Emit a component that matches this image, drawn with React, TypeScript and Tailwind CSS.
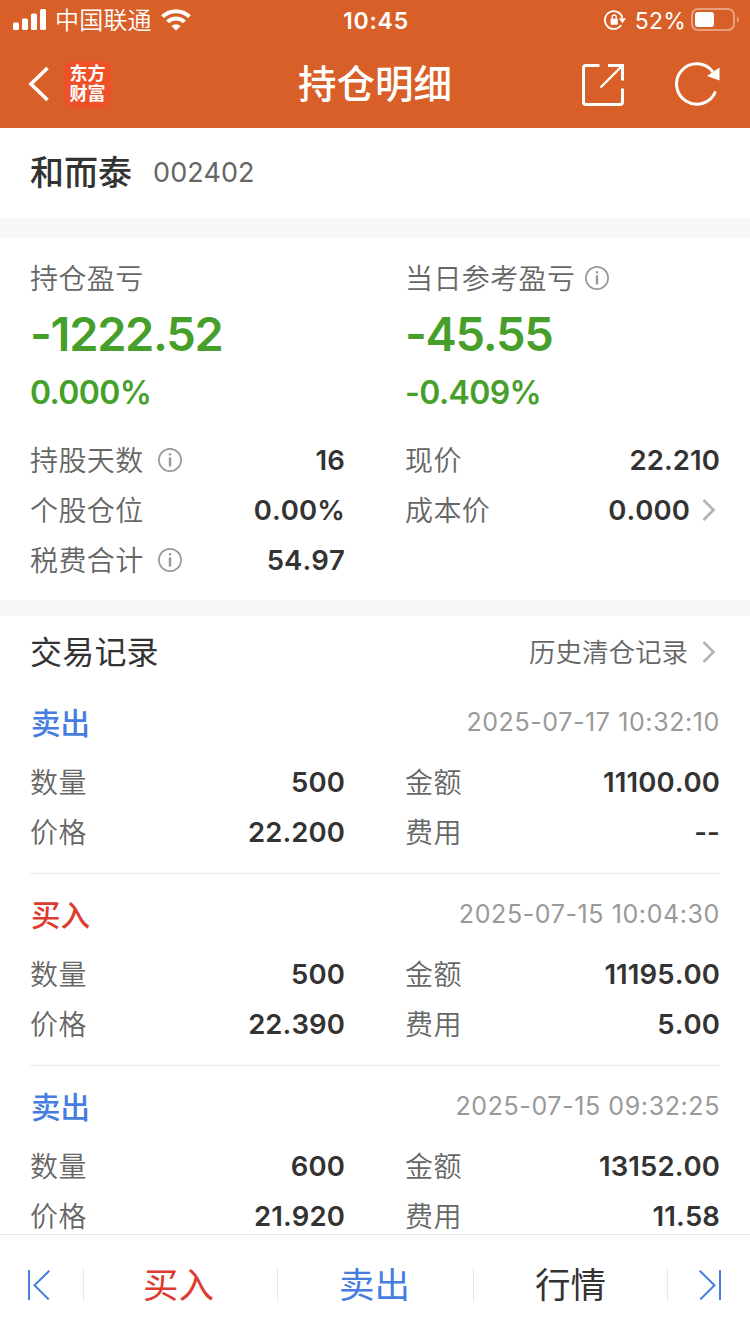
import React from 'react';

interface TradeRecord {
  side: 'buy' | 'sell';
  time: string;
  quantity: string;
  amount: string;
  price: string;
  fee: string;
}

const records: TradeRecord[] = [
  { side: 'sell', time: '2025-07-17 10:32:10', quantity: '500', amount: '11100.00', price: '22.200', fee: '--' },
  { side: 'buy', time: '2025-07-15 10:04:30', quantity: '500', amount: '11195.00', price: '22.390', fee: '5.00' },
  { side: 'sell', time: '2025-07-15 09:32:25', quantity: '600', amount: '13152.00', price: '21.920', fee: '11.58' },
];

const InfoIcon: React.FC = () => (
  <svg className="w-6 h-6 shrink-0" viewBox="0 0 24 24" fill="none" stroke="#999">
    <circle cx="12" cy="12" r="11.1" strokeWidth="1.7" />
    <path d="M12 9.3V18.6" strokeWidth="2.4" />
    <path d="M12 5.2V7.4" strokeWidth="2.4" />
  </svg>
);

const ChevronIcon: React.FC = () => (
  <svg className="w-3.5 h-6 shrink-0" viewBox="0 0 14 24" fill="none" stroke="#b3b3b3" strokeWidth="2.6">
    <path d="M1.5 2L11.5 12L1.5 22" />
  </svg>
);

const StatusBar: React.FC = () => (
  <div className="grid grid-cols-3 items-center h-10 pl-[13px] pr-[11px]">
    <div className="flex items-center">
      <svg className="w-[33px] h-[22px]" viewBox="0 0 33 22" fill="#fff">
        <rect x="0" y="13.5" width="6" height="7.5" rx="1.5" />
        <rect x="9" y="9.5" width="6" height="11.5" rx="1.5" />
        <rect x="18" y="4.5" width="6" height="16.5" rx="1.5" />
        <rect x="27" y="0" width="6" height="21" rx="1.5" />
      </svg>
      <span className="ml-[9px] pt-0.5 text-2xl font-[350] tracking-[0.2px]">中国联通</span>
      <svg className="ml-[9px] w-[30px] h-[22px]" viewBox="0 0 30 22" fill="none" stroke="#fff" strokeWidth="4">
        <path d="M1.6 7.7A19 19 0 0 1 28.4 7.7" />
        <path d="M6.6 12.9A12 12 0 0 1 23.4 12.9" />
        <path d="M10.4 17A6.8 6.8 0 0 1 19.6 17L15 21.5Z" fill="#fff" stroke="none" />
      </svg>
    </div>
    <div className="pt-0.5 text-center text-[23px] font-semibold tracking-[0.8px]">10:45</div>
    <div className="flex items-center justify-end">
      <svg className="w-[22px] h-[22px]" viewBox="0 0 22 22" fill="none" stroke="#fff">
        <path d="M17.2 16A8.9 8.9 0 1 1 18.4 8.8" strokeWidth="1.8" />
        <path d="M14.8 9.2H22L18.4 14.2Z" fill="#fff" stroke="none" />
        <rect x="6.6" y="9.8" width="7.2" height="6" rx="0.8" fill="#fff" stroke="none" />
        <path d="M8.2 10V8A2 2 0 0 1 12.2 8V10" strokeWidth="1.4" />
      </svg>
      <span className="ml-[9px] pt-0.5 text-[23px] tracking-[0.2px]">52%</span>
      <svg className="ml-[5px] -mr-px w-[49px] h-6" viewBox="0 0 49 24" fill="none">
        <rect x="1" y="1" width="42" height="21" rx="6" stroke="#fff" strokeOpacity="0.4" strokeWidth="2" />
        <rect x="4" y="4" width="19" height="15" rx="3" fill="#fff" />
        <path d="M46 8.5Q48 9.5 48 11.5Q48 13.5 46 14.5Z" fill="#fff" fillOpacity="0.45" />
      </svg>
    </div>
  </div>
);

const NavBar: React.FC = () => (
  <div className="grid grid-cols-3 items-center h-[88px] pl-7 pr-[30px]">
    <div className="flex items-center">
      <svg className="w-[21px] h-9" viewBox="0 0 21 36" fill="none" stroke="#fff" strokeWidth="3.6">
        <path d="M19.5 2L3 18L19.5 34" />
      </svg>
      <div className="ml-[15px] w-[47px] h-[47px] rounded-lg bg-[#ec5127] flex flex-col items-center justify-center text-[18px] leading-[20px] font-bold">
        <span>东方</span>
        <span>财富</span>
      </div>
    </div>
    <h1 className="pl-0.5 text-center text-[38.5px] leading-none font-medium whitespace-nowrap">持仓明细</h1>
    <div className="flex items-center justify-end gap-[51px]">
      <svg className="w-[42px] h-[42px] mt-0.5" viewBox="0 0 42 42" fill="none" stroke="#fff" strokeWidth="3">
        <path d="M17.5 1.5H4Q1.5 1.5 1.5 4V38Q1.5 40.5 4 40.5H38Q40.5 40.5 40.5 38V24.5" />
        <path d="M26 1.5H40.5V16.5" />
        <path d="M40 2L18.5 23.5" strokeWidth="2.4" />
      </svg>
      <svg className="w-[45px] h-[44px]" viewBox="0 0 45 44" fill="none" stroke="#fff" strokeWidth="3">
        <path d="M40.5 29.5A20.2 20.2 0 1 1 38 10" />
        <path d="M44.5 5.5V18.5L32 14Z" fill="#fff" stroke="none" />
      </svg>
    </div>
  </div>
);

interface FieldProps {
  label: string;
  value: string;
  info?: boolean;
  arrow?: boolean;
}

const Field: React.FC<FieldProps> = ({ label, value, info, arrow }) => (
  <div className="flex items-center justify-between h-[50px]">
    <div className="flex items-center gap-3.5">
      <span className="pt-0.5 text-[28px] font-[350] tracking-[0.4px] text-[#666]">{label}</span>
      {info && <InfoIcon />}
    </div>
    <div className="flex items-center gap-3">
      <span className="pt-0.5 text-[27.5px] font-semibold tracking-[0.1px] [font-kerning:none] text-[#333]">{value}</span>
      {arrow && (
        <span className="pr-1">
          <ChevronIcon />
        </span>
      )}
    </div>
  </div>
);

const RecordItem: React.FC<{ record: TradeRecord }> = ({ record }) => (
  <div className="pt-[15px] pb-4 border-b border-[#ebebeb]">
    <div className="flex items-center justify-between h-[50px] mb-2.5">
      <span className={`pt-0.5 pl-px text-[29.5px] font-medium ${record.side === 'buy' ? 'text-[#dd3a30]' : 'text-[#457de0]'}`}>
        {record.side === 'buy' ? '买入' : '卖出'}
      </span>
      <span className="pt-0.5 text-[25px] tracking-[0.6px] text-[#999]">{record.time}</span>
    </div>
    <div className="grid grid-cols-2 gap-x-[60px]">
      <Field label="数量" value={record.quantity} />
      <Field label="金额" value={record.amount} />
      <Field label="价格" value={record.price} />
      <Field label="费用" value={record.fee} />
    </div>
  </div>
);

const App: React.FC = () => {
  return (
    <div className="flex flex-col w-[750px] h-[1334px] overflow-hidden bg-white font-['Inter','Noto_Sans_CJK_SC',sans-serif]">
      <header className="shrink-0 bg-[#d86028] text-white">
        <StatusBar />
        <NavBar />
      </header>

      <main className="flex-1 min-h-0 overflow-hidden">
        {/* Stock */}
        <div className="flex items-center h-[90px] px-[30px] gap-[21px]">
          <span className="text-[34px] leading-none font-medium text-[#333]">和而泰</span>
          <span className="text-[27px] tracking-[0.1px] text-[#666]">002402</span>
        </div>
        <div className="h-5 bg-[#f7f8fa]" />

        {/* Position summary */}
        <section className="h-[362px] px-[30px] pt-[15px]">
          <div className="grid grid-cols-2 gap-x-[60px]">
            <div>
              <div className="flex items-center h-[50px] pt-0.5 text-[28px] font-[350] tracking-[0.4px] text-[#666]">持仓盈亏</div>
              <div className="flex items-center h-[62px] text-[47px] font-semibold tracking-[-1.3px] text-[#469f2b]">-1222.52</div>
              <div className="flex items-center h-[54px] pt-0.5 text-[32px] font-semibold tracking-[-0.6px] text-[#469f2b]">0.000%</div>
            </div>
            <div>
              <div className="flex items-center gap-2.5 h-[50px] text-[28px] font-[350] tracking-[0.4px] text-[#666]">
                <span className="pt-0.5">当日参考盈亏</span>
                <InfoIcon />
              </div>
              <div className="flex items-center h-[62px] text-[47px] font-semibold tracking-[-1.3px] text-[#469f2b]">-45.55</div>
              <div className="flex items-center h-[54px] pt-0.5 text-[32px] font-semibold tracking-[-0.6px] text-[#469f2b]">-0.409%</div>
            </div>
          </div>
          <div className="grid grid-cols-2 gap-x-[60px] pt-4">
            <Field label="持股天数" value="16" info />
            <Field label="现价" value="22.210" />
            <Field label="个股仓位" value="0.00%" />
            <Field label="成本价" value="0.000" arrow />
            <Field label="税费合计" value="54.97" info />
          </div>
        </section>
        <div className="h-4 bg-[#f7f8fa]" />

        {/* Trade records */}
        <section className="px-[30px]">
          <div className="flex items-center justify-between h-[66px] pt-1.5">
            <h2 className="pt-0.5 text-[32px] font-normal tracking-[0.2px] text-[#333]">交易记录</h2>
            <div className="flex items-center gap-3.5 pr-1 text-[26.5px] font-[350] text-[#666]">
              <span className="pt-0.5">历史清仓记录</span>
              <ChevronIcon />
            </div>
          </div>
          {records.map(record => (
            <RecordItem key={record.time} record={record} />
          ))}
        </section>
      </main>

      <footer className="shrink-0 flex items-center h-[100px] border-t border-[#e8e8e8] bg-white text-[35.5px] leading-none">
        <button className="w-[83px] pl-7">
          <svg className="w-[22px] h-[30px]" viewBox="0 0 22 30" fill="none" stroke="#457de0" strokeWidth="2">
            <path d="M1 0V30" />
            <path d="M21.3 0.7L6.5 15.2L20.7 29.4" />
          </svg>
        </button>
        <button className="w-[194px] h-[34px] pr-1 border-l border-[#e8e8e8] text-[#dd3a30]">买入</button>
        <button className="w-[196px] h-[34px] pr-0.5 border-l border-[#e8e8e8] text-[#457de0]">卖出</button>
        <button className="w-[194px] h-[34px] border-l border-[#e8e8e8] text-[#333]">行情</button>
        <button className="w-[83px] h-[34px] border-l border-[#e8e8e8] pl-[31px]">
          <svg className="w-[22px] h-[30px]" viewBox="0 0 22 30" fill="none" stroke="#457de0" strokeWidth="2">
            <path d="M21 0V30" />
            <path d="M0.7 0.7L15.5 15.2L1.3 29.4" />
          </svg>
        </button>
      </footer>
    </div>
  );
};

export default App;
